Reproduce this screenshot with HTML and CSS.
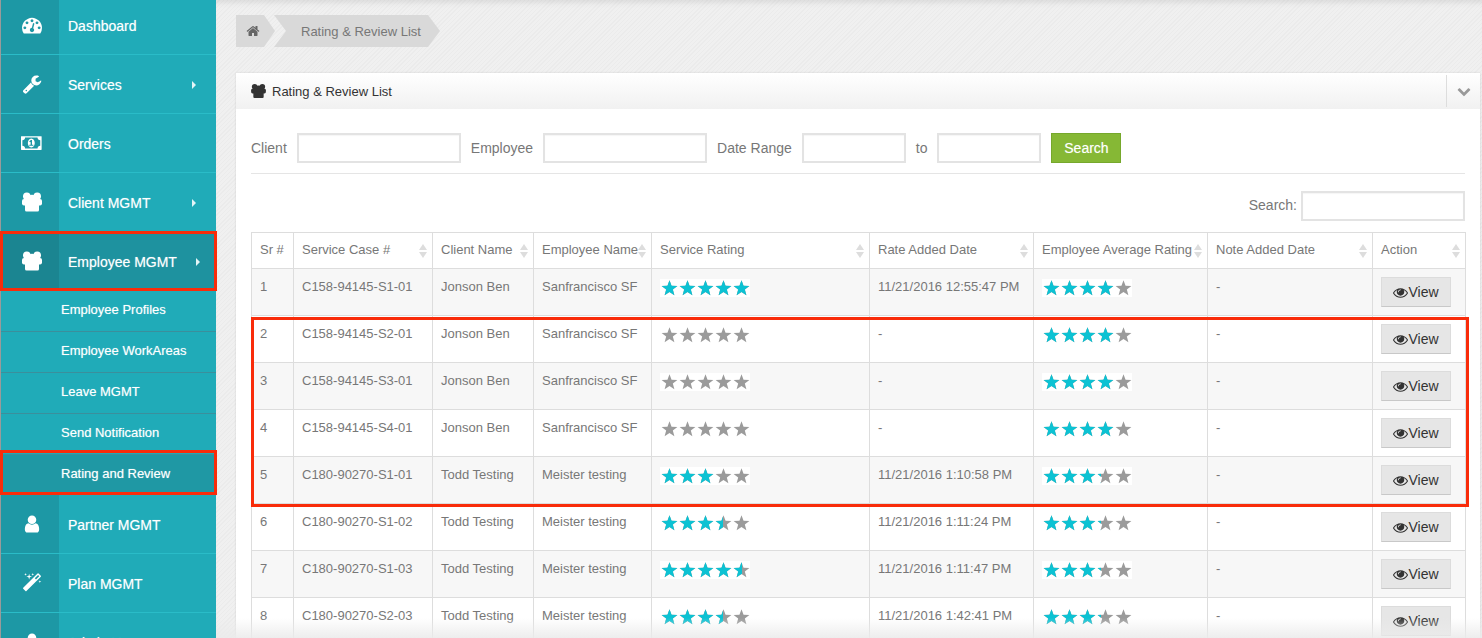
FILE: index.html
```html
<!DOCTYPE html>
<html lang="en">
<head>
    <meta charset="UTF-8">
    <meta name="viewport" content="width=device-width, initial-scale=1.0">
    <title>Rating &amp; Review List</title>
    <link rel="stylesheet" href="styles.css">
</head>
<body>
    <svg class="sprites" aria-hidden="true">
        <symbol id="i-dashboard" viewBox="0 0 1792 1792"><path d="M384 1152q0-53-37.500-90.500t-90.500-37.500-90.500 37.500-37.500 90.500 37.500 90.500 90.500 37.500 90.500-37.500 37.500-90.500zm192-448q0-53-37.500-90.500t-90.500-37.500-90.500 37.500-37.500 90.500 37.500 90.500 90.500 37.500 90.500-37.500 37.500-90.500zm428 481l101-382q6-26-7.500-48.500t-38.500-29.500-48 6.500-30 39.500l-101 382q-60 5-107 43.500t-63 98.500q-20 77 20 146t117 89 146-20 89-117q16-60-6-117t-72-91zm660-33q0-53-37.500-90.500t-90.500-37.500-90.500 37.500-37.500 90.500 37.500 90.500 90.500 37.500 90.500-37.500 37.500-90.500zm-640-640q0-53-37.500-90.500t-90.500-37.500-90.500 37.500-37.500 90.500 37.500 90.500 90.500 37.500 90.500-37.500 37.500-90.500zm448 192q0-53-37.500-90.500t-90.500-37.500-90.500 37.500-37.500 90.500 37.500 90.500 90.500 37.500 90.500-37.500 37.500-90.500zm320 448q0 261-141 483-19 29-54 29h-1402q-35 0-54-29-141-221-141-483 0-182 71-348t191-286 286-191 348-71 348 71 286 191 191 286 71 348z"/></symbol>
        <symbol id="i-wrench" viewBox="0 0 1792 1792"><path d="M448 1472q0-26-19-45t-45-19-45 19-19 45 19 45 45 19 45-19 19-45zm644-420l-682 682q-37 37-90 37-52 0-91-37l-106-108q-38-36-38-90 0-53 38-91l681-681q39 98 114.500 173.500t173.500 114.500zm634-435q0 39-23 106-47 134-164.500 217.500t-258.500 83.500q-185 0-316.500-131.500t-131.500-316.500 131.500-316.500 316.500-131.500q58 0 121.500 16.500t107.500 46.500q16 11 16 28t-16 28l-293 169v224l193 107q5-3 79-48.500t135.500-81 70.500-35.500q15 0 23.500 10t8.500 25z"/></symbol>
        <symbol id="i-money" viewBox="0 0 2048 1792"><path d="M768 1152h384v-96h-128v-448h-114l-148 137 77 80q42-37 55-57h2v288h-128v96zm512-256q0 70-21 142t-59.500 134-101.500 101-138 39-138-39-101.500-101-59.500-134-21-142 21-142 59.500-134 101.500-101 138-39 138 39 101.500 101 59.500 134 21 142zm512 256v-512q-106 0-181-75t-75-181h-1152q0 106-75 181t-181 75v512q106 0 181 75t75 181h1152q0-106 75-181t181-75zm128-832v1152q0 26-19 45t-45 19h-1792q-26 0-45-19t-19-45v-1152q0-26 19-45t45-19h1792q26 0 45 19t19 45z"/></symbol>
        <symbol id="i-group" viewBox="0 0 20 19">
            <circle cx="4.800" cy="3.800" r="3.800"/>
            <circle cx="15.200" cy="3.800" r="3.800"/>
            <circle cx="10" cy="6.500" r="4.300"/>
            <rect x="0" y="6.500" width="20" height="6.500" rx="2"/>
            <rect x="3" y="10" width="14" height="9" rx="1.500"/>
        </symbol>
        <symbol id="i-user" viewBox="0 0 1792 1792"><path d="M1536 1399q0 109-62.500 187t-150.500 78h-854q-88 0-150.500-78t-62.500-187q0-85 8.500-160.500t31.500-152 58.500-131 94-89 134.500-34.500q131 128 313 128t313-128q76 0 134.500 34.500t94 89 58.500 131 31.500 152 8.500 160.500zm-256-887q0 159-112.500 271.500t-271.500 112.500-271.500-112.500-112.500-271.500 112.500-271.500 271.500-112.500 271.500 112.500 112.500 271.500z"/></symbol>
        <symbol id="i-magic" viewBox="0 0 1792 1792"><path d="M1254 581l293-293-107-107-293 293zm447-293q0 27-18 45l-1286 1286q-18 18-45 18t-45-18l-198-198q-18-18-18-45t18-45l1286-1286q18-18 45-18t45 18l198 198q18 18 18 45zm-1351-190l98 30-98 30-30 98-30-98-98-30 98-30 30-98zm350 162l196 60-196 60-60 196-60-196-196-60 196-60 60-196zm930 478l98 30-98 30-30 98-30-98-98-30 98-30 30-98zm-640-640l98 30-98 30-30 98-30-98-98-30 98-30 30-98z"/></symbol>
        <symbol id="i-home" viewBox="0 0 1792 1792"><path d="M1472 992v480q0 26-19 45t-45 19h-384v-384h-256v384h-384q-26 0-45-19t-19-45v-480q0-1 .5-3t.5-3l575-474 575 474q1 2 1 6zm223-69l-62 74q-8 9-21 11h-3q-13 0-21-7l-692-577-692 577q-12 8-24 7-13-2-21-11l-62-74q-8-10-7-23.500t11-21.500l719-599q32-26 76-26t76 26l244 204v-195q0-14 9-23t23-9h192q14 0 23 9t9 23v408l219 182q10 8 11 21.500t-7 23.500z"/></symbol>
        <symbol id="i-chevron" viewBox="0 0 1792 1792"><path d="M1683 808l-742 741q-19 19-45 19t-45-19l-742-741q-19-19-19-45.500t19-45.500l166-165q19-19 45-19t45 19l531 531 531-531q19-19 45-19t45 19l166 165q19 19 19 45.500t-19 45.500z"/></symbol>
        <symbol id="i-eye" viewBox="0 0 1792 1792"><path d="M1664 960q-152-236-381-353 61 104 61 225 0 185-131.500 316.500t-316.500 131.500-316.500-131.500-131.500-316.500q0-121 61-225-229 117-381 353 133 205 333.500 326.500t434.500 121.500 434.500-121.500 333.500-326.500zm-720-384q0-20-14-34t-34-14q-125 0-214.500 89.500t-89.500 214.500q0 20 14 34t34 14 34-14 14-34q0-86 61-147t147-61q20 0 34-14t14-34zm848 384q0 34-20 69-140 230-376.500 368.500t-499.500 138.500-499.500-139-376.500-368q-20-35-20-69t20-69q140-229 376.500-368t499.500-139 499.500 139 376.500 368q20 35 20 69z"/></symbol>
        <symbol id="five-stars" viewBox="0 0 90 18">
            <polygon id="star" points="9.5,1.2 11.56,6.67 17.39,6.94 12.83,10.58 14.38,16.21 9.5,13 4.62,16.21 6.17,10.58 1.61,6.94 7.44,6.67"/>
            <use href="#star" x="18"/>
            <use href="#star" x="36"/>
            <use href="#star" x="54"/>
            <use href="#star" x="72"/>
        </symbol>
    </svg>

    <div class="layout">
        <nav class="sidebar">
            <a class="nav-item"><span class="nav-icon"><svg class="icon"><use href="#i-dashboard"/></svg></span>Dashboard</a>
            <a class="nav-item"><span class="nav-icon"><svg class="icon"><use href="#i-wrench"/></svg></span>Services<span class="caret"></span></a>
            <a class="nav-item"><span class="nav-icon"><svg class="icon icon-wide"><use href="#i-money"/></svg></span>Orders</a>
            <a class="nav-item"><span class="nav-icon"><svg class="icon"><use href="#i-group"/></svg></span>Client MGMT<span class="caret"></span></a>
            <a class="nav-item active"><span class="nav-icon"><svg class="icon"><use href="#i-group"/></svg></span>Employee MGMT<span class="caret"></span></a>
            <div class="submenu">
                <a class="sub-item">Employee Profiles</a>
                <a class="sub-item">Employee WorkAreas</a>
                <a class="sub-item">Leave MGMT</a>
                <a class="sub-item">Send Notification</a>
                <a class="sub-item active">Rating and Review</a>
            </div>
            <a class="nav-item"><span class="nav-icon"><svg class="icon"><use href="#i-user"/></svg></span>Partner MGMT</a>
            <a class="nav-item"><span class="nav-icon"><svg class="icon"><use href="#i-magic"/></svg></span>Plan MGMT</a>
            <a class="nav-item"><span class="nav-icon"><svg class="icon"><use href="#i-user"/></svg></span>Admin Users</a>
        </nav>

        <main class="content">
            <div class="breadcrumb">
                <a class="crumb crumb-home"><svg class="icon-home"><use href="#i-home"/></svg></a>
                <a class="crumb crumb-page">Rating &amp; Review List</a>
            </div>

            <section class="panel">
                <header class="panel-head">
                    <svg class="icon-title"><use href="#i-group"/></svg>
                    <h2>Rating &amp; Review List</h2>
                    <span class="panel-toggle"><svg class="icon-chevron"><use href="#i-chevron"/></svg></span>
                </header>

                <div class="panel-body">
                    <form class="filters">
                        <label for="client">Client</label>
                        <input type="text" id="client" class="input-wide">
                        <label for="employee">Employee</label>
                        <input type="text" id="employee" class="input-wide">
                        <label for="dateFrom">Date Range</label>
                        <input type="text" id="dateFrom" class="input-date">
                        <label for="dateTo">to</label>
                        <input type="text" id="dateTo" class="input-date">
                        <button type="button" class="btn-search">Search</button>
                    </form>

                    <div class="table-search">
                        <label for="tableSearch">Search:</label>
                        <input type="text" id="tableSearch" class="input-wide">
                    </div>

                    <table class="reviews">
                        <colgroup>
                            <col class="col-sr"><col class="col-case"><col class="col-client"><col class="col-employee"><col class="col-rating"><col class="col-date"><col class="col-average"><col class="col-note"><col class="col-action">
                        </colgroup>
                        <thead>
                            <tr>
                                <th>Sr #</th>
                                <th class="sortable">Service Case #</th>
                                <th class="sortable">Client Name</th>
                                <th class="sortable">Employee Name</th>
                                <th class="sortable">Service Rating</th>
                                <th class="sortable">Rate Added Date</th>
                                <th class="sortable">Employee Average Rating</th>
                                <th class="sortable">Note Added Date</th>
                                <th class="sortable">Action</th>
                            </tr>
                        </thead>
                        <tbody>
                            <tr>
                                <td>1</td><td>C158-94145-S1-01</td><td>Jonson Ben</td><td>Sanfrancisco SF</td>
                                <td><div class="rating"><svg class="stars"><use href="#five-stars"/></svg><div class="rating-fill" style="width:100%"><svg class="stars"><use href="#five-stars"/></svg></div></div></td>
                                <td>11/21/2016 12:55:47 PM</td>
                                <td><div class="rating"><svg class="stars"><use href="#five-stars"/></svg><div class="rating-fill" style="width:80%"><svg class="stars"><use href="#five-stars"/></svg></div></div></td>
                                <td>-</td>
                                <td><button type="button" class="btn-view"><svg class="icon-eye"><use href="#i-eye"/></svg>View</button></td>
                            </tr>
                            <tr>
                                <td>2</td><td>C158-94145-S2-01</td><td>Jonson Ben</td><td>Sanfrancisco SF</td>
                                <td><div class="rating"><svg class="stars"><use href="#five-stars"/></svg></div></td>
                                <td>-</td>
                                <td><div class="rating"><svg class="stars"><use href="#five-stars"/></svg><div class="rating-fill" style="width:80%"><svg class="stars"><use href="#five-stars"/></svg></div></div></td>
                                <td>-</td>
                                <td><button type="button" class="btn-view"><svg class="icon-eye"><use href="#i-eye"/></svg>View</button></td>
                            </tr>
                            <tr>
                                <td>3</td><td>C158-94145-S3-01</td><td>Jonson Ben</td><td>Sanfrancisco SF</td>
                                <td><div class="rating"><svg class="stars"><use href="#five-stars"/></svg></div></td>
                                <td>-</td>
                                <td><div class="rating"><svg class="stars"><use href="#five-stars"/></svg><div class="rating-fill" style="width:80%"><svg class="stars"><use href="#five-stars"/></svg></div></div></td>
                                <td>-</td>
                                <td><button type="button" class="btn-view"><svg class="icon-eye"><use href="#i-eye"/></svg>View</button></td>
                            </tr>
                            <tr>
                                <td>4</td><td>C158-94145-S4-01</td><td>Jonson Ben</td><td>Sanfrancisco SF</td>
                                <td><div class="rating"><svg class="stars"><use href="#five-stars"/></svg></div></td>
                                <td>-</td>
                                <td><div class="rating"><svg class="stars"><use href="#five-stars"/></svg><div class="rating-fill" style="width:80%"><svg class="stars"><use href="#five-stars"/></svg></div></div></td>
                                <td>-</td>
                                <td><button type="button" class="btn-view"><svg class="icon-eye"><use href="#i-eye"/></svg>View</button></td>
                            </tr>
                            <tr>
                                <td>5</td><td>C180-90270-S1-01</td><td>Todd Testing</td><td>Meister testing</td>
                                <td><div class="rating"><svg class="stars"><use href="#five-stars"/></svg><div class="rating-fill" style="width:60%"><svg class="stars"><use href="#five-stars"/></svg></div></div></td>
                                <td>11/21/2016 1:10:58 PM</td>
                                <td><div class="rating"><svg class="stars"><use href="#five-stars"/></svg><div class="rating-fill" style="width:66%"><svg class="stars"><use href="#five-stars"/></svg></div></div></td>
                                <td>-</td>
                                <td><button type="button" class="btn-view"><svg class="icon-eye"><use href="#i-eye"/></svg>View</button></td>
                            </tr>
                            <tr>
                                <td>6</td><td>C180-90270-S1-02</td><td>Todd Testing</td><td>Meister testing</td>
                                <td><div class="rating"><svg class="stars"><use href="#five-stars"/></svg><div class="rating-fill" style="width:70%"><svg class="stars"><use href="#five-stars"/></svg></div></div></td>
                                <td>11/21/2016 1:11:24 PM</td>
                                <td><div class="rating"><svg class="stars"><use href="#five-stars"/></svg><div class="rating-fill" style="width:66%"><svg class="stars"><use href="#five-stars"/></svg></div></div></td>
                                <td>-</td>
                                <td><button type="button" class="btn-view"><svg class="icon-eye"><use href="#i-eye"/></svg>View</button></td>
                            </tr>
                            <tr>
                                <td>7</td><td>C180-90270-S1-03</td><td>Todd Testing</td><td>Meister testing</td>
                                <td><div class="rating"><svg class="stars"><use href="#five-stars"/></svg><div class="rating-fill" style="width:91%"><svg class="stars"><use href="#five-stars"/></svg></div></div></td>
                                <td>11/21/2016 1:11:47 PM</td>
                                <td><div class="rating"><svg class="stars"><use href="#five-stars"/></svg><div class="rating-fill" style="width:66%"><svg class="stars"><use href="#five-stars"/></svg></div></div></td>
                                <td>-</td>
                                <td><button type="button" class="btn-view"><svg class="icon-eye"><use href="#i-eye"/></svg>View</button></td>
                            </tr>
                            <tr>
                                <td>8</td><td>C180-90270-S2-03</td><td>Todd Testing</td><td>Meister testing</td>
                                <td><div class="rating"><svg class="stars"><use href="#five-stars"/></svg><div class="rating-fill" style="width:70%"><svg class="stars"><use href="#five-stars"/></svg></div></div></td>
                                <td>11/21/2016 1:42:41 PM</td>
                                <td><div class="rating"><svg class="stars"><use href="#five-stars"/></svg><div class="rating-fill" style="width:66%"><svg class="stars"><use href="#five-stars"/></svg></div></div></td>
                                <td>-</td>
                                <td><button type="button" class="btn-view"><svg class="icon-eye"><use href="#i-eye"/></svg>View</button></td>
                            </tr>
                        </tbody>
                    </table>
                </div>
            </section>
            <div class="bottom-fade"></div>
        </main>
    </div>

    <!-- red annotation boxes drawn over the screenshot -->
    <div class="mark mark-employee"></div>
    <div class="mark mark-review"></div>
    <div class="mark mark-rows"></div>
</body>
</html>
```

FILE: styles.css
```css
/* Basic reset */
* {
    box-sizing: border-box;
    margin: 0;
    padding: 0;
    font-family: "Liberation Sans", Arial, sans-serif;
}

html, body {
    height: 100%;
    overflow: hidden;
}

body {
    position: relative;
    color: #777;
    font-size: 13px;
}

.sprites {
    display: none;
}

.layout {
    display: flex;
    height: 100vh;
}

/* Sidebar */
.sidebar {
    flex: 0 0 216px;
    margin-top: -4px;
    border-left: 1px solid #9a9a9a;
    background-color: #20abb8;
    color: #fff;
}

.nav-item {
    display: flex;
    align-items: center;
    height: 59px;
    padding-top: 1px;
    border-bottom: 1px solid #2abcc8;
    font-size: 14px;
    text-shadow: 0 0 1px rgba(255, 255, 255, 0.5);
}

.nav-icon {
    display: flex;
    align-items: center;
    justify-content: center;
    align-self: stretch;
    flex: 0 0 58px;
    margin-top: -1px;
    margin-right: 9px;
    padding-left: 4px;
    background-color: #1d98a5;
}

.icon {
    width: 20px;
    height: 20px;
    fill: #fff;
}

.icon-wide {
    width: 22px;
}

.caret {
    width: 0;
    height: 0;
    margin-left: auto;
    margin-right: 20px;
    border-top: 4px solid transparent;
    border-bottom: 4px solid transparent;
    border-left: 4px solid #e4f5f7;
}

.nav-item.active {
    border-bottom-color: #1e929f;
    background-color: #1e929f;
}

.nav-item.active .nav-icon {
    background-color: #1b8591;
}

.nav-item.active .caret {
    margin-right: 16px;
}

.sub-item {
    display: flex;
    align-items: center;
    height: 41px;
    padding: 0 0 3px 60px;
    border-bottom: 1px solid #3b8f9c;
    font-size: 13px;
    text-shadow: 0 0 1px rgba(255, 255, 255, 0.5);
}

.sub-item:last-child {
    height: 40px;
    border-bottom: 0;
}

.sub-item.active {
    background-color: #1f98a4;
}

/* Main area */
.content {
    position: relative;
    flex: 1;
    padding: 15px 2px 0 20px;
    overflow: hidden;
    background-color: #eee;
    background-image: repeating-linear-gradient(135deg, #f0f0f0 0, #f0f0f0 2px, #ebebeb 2px, #ebebeb 3px);
    box-shadow: inset 0 6px 6px -4px rgba(0, 0, 0, 0.1);
}

.breadcrumb {
    display: flex;
    height: 32px;
    margin-bottom: 26px;
}

.crumb {
    display: flex;
    align-items: center;
    background-color: #d9d9d9;
}

.crumb-home {
    width: 39px;
    padding-left: 10px;
    clip-path: polygon(0 0, 28px 0, 100% 50%, 28px 100%, 0 100%);
}

.icon-home {
    width: 14px;
    height: 14px;
    fill: #666;
}

.crumb-page {
    width: 166px;
    margin-left: -1px;
    padding-left: 27px;
    clip-path: polygon(0 0, 154px 0, 100% 50%, 154px 100%, 0 100%, 12px 50%);
}

.panel {
    background-color: #fff;
    box-shadow: 0 0 2px rgba(0, 0, 0, 0.12);
}

.panel-head {
    display: flex;
    align-items: center;
    height: 36px;
    padding-left: 15px;
    background: linear-gradient(#fff, #f1f1f1);
    color: #333;
}

.panel-head h2 {
    font-size: 13px;
    font-weight: normal;
}

.icon-title {
    width: 15px;
    height: 14px;
    margin-right: 6px;
    fill: #333;
}

.panel-toggle {
    display: flex;
    align-items: center;
    justify-content: center;
    width: 34px;
    height: 32px;
    margin-left: auto;
    border-left: 1px solid #ddd;
}

.icon-chevron {
    width: 14px;
    height: 14px;
    fill: #999;
}

.panel-body {
    padding: 24px 15px 0;
}

label {
    font-size: 14px;
}

input {
    height: 30px;
    border: 2px solid #e3e3e3;
    background-color: #fff;
    box-shadow: inset 0 1px 1px rgba(0, 0, 0, 0.04);
}

.input-wide {
    width: 164px;
}

.input-date {
    width: 104px;
}

.filters {
    display: flex;
    align-items: center;
    gap: 10px;
    padding-bottom: 10px;
    border-bottom: 1px solid #e5e5e5;
}

.btn-search {
    width: 70px;
    height: 30px;
    border: 1px solid #76a82c;
    background-color: #86b835;
    color: #fff;
    font-size: 14px;
    text-shadow: 0 0 1px rgba(255, 255, 255, 0.4);
}

.table-search {
    display: flex;
    align-items: center;
    justify-content: flex-end;
    gap: 4px;
    margin: 17px 0 11px;
}

.table-search label {
    padding-bottom: 2px;
}

/* Table */
.reviews {
    width: 1214px;
    border-collapse: collapse;
    table-layout: fixed;
}

.col-sr { width: 42px; }
.col-case { width: 139px; }
.col-client { width: 101px; }
.col-employee { width: 118px; }
.col-rating { width: 218px; }
.col-date { width: 164px; }
.col-average { width: 174px; }
.col-note { width: 165px; }
.col-action { width: 93px; }

.reviews th, .reviews td {
    border: 1px solid #ddd;
    padding: 8px;
    line-height: 18px;
    text-align: left;
    vertical-align: top;
    white-space: nowrap;
}

.reviews th {
    position: relative;
    height: 36px;
    font-weight: normal;
}

.reviews td {
    height: 47px;
    padding-top: 9px;
}

.reviews tbody tr:nth-child(odd) td {
    background-color: #f7f7f7;
}

/* sort arrows */
.sortable::before, .sortable::after {
    content: "";
    position: absolute;
    right: 5px;
    border-left: 4px solid transparent;
    border-right: 4px solid transparent;
}

.sortable::before {
    top: 11px;
    border-bottom: 6px solid #ddd;
}

.sortable::after {
    top: 19px;
    border-top: 6px solid #ddd;
}

.rating {
    position: relative;
    width: 90px;
    height: 18px;
    margin-top: 1px;
    background-color: #fff;
}

.stars {
    display: block;
    width: 90px;
    height: 18px;
    fill: #9b9b9b;
}

.rating-fill {
    position: absolute;
    top: 0;
    left: 0;
    height: 18px;
    overflow: hidden;
}

.rating-fill .stars {
    fill: #0cc2d3;
}

.btn-view {
    display: flex;
    align-items: center;
    justify-content: center;
    width: 70px;
    height: 30px;
    margin-top: -1px;
    border: 1px solid #dcdcdc;
    border-bottom-color: #c8c8c8;
    background-color: #e6e6e6;
    color: #333;
    font-size: 14px;
}

.icon-eye {
    width: 15px;
    height: 15px;
    fill: #333;
}

.bottom-fade {
    position: absolute;
    left: 0;
    right: 0;
    bottom: 0;
    height: 20px;
    background: linear-gradient(rgba(235, 235, 235, 0), rgba(235, 235, 235, 0.9));
}

/* Annotations */
.mark {
    position: absolute;
    border: 3px solid #f92c0a;
}

.mark-employee {
    left: 0;
    top: 231px;
    width: 217px;
    height: 60px;
}

.mark-review {
    left: 0;
    top: 450px;
    width: 217px;
    height: 45px;
}

.mark-rows {
    left: 251px;
    top: 317px;
    width: 1218px;
    height: 190px;
}
```
